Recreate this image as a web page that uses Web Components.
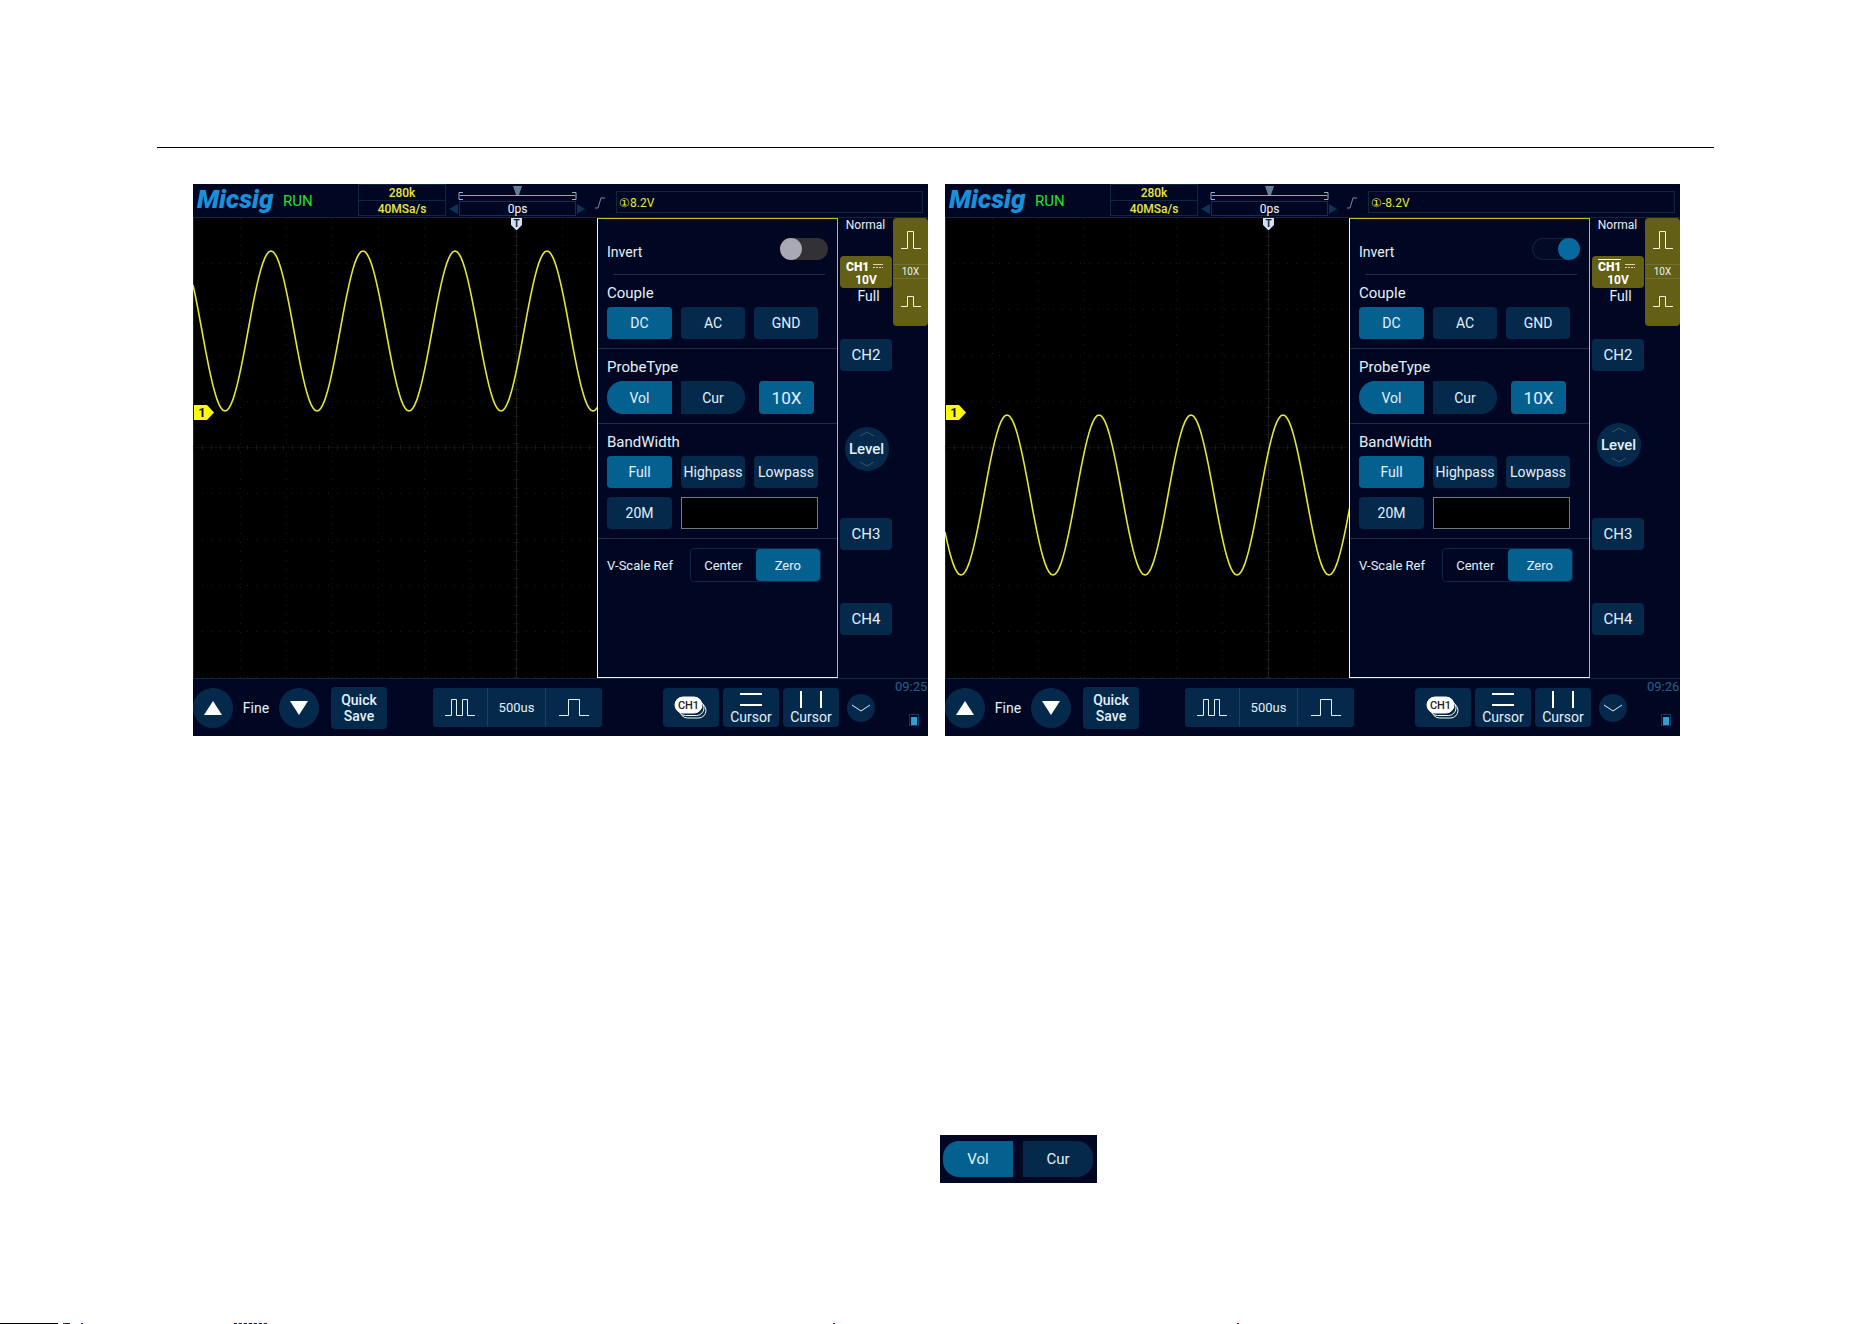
<!DOCTYPE html>
<html lang="en">
<head>
<meta charset="utf-8">
<title>Channel settings: Invert</title>
<style>
  body {
    margin: 0;
    min-height: 100vh;
    display: flex;
    flex-direction: column;
    background: #fff;
    font-family: Roboto, "Liberation Sans", sans-serif;
  }
  hr {
    height: 1px;
    margin: 147px 158px 36px 157px;
    border: 0;
    background: #000;
  }
  .screens {
    display: grid;
    grid-template-columns: 1fr 1fr;
    gap: 17px;
    margin: 0 192px 0 193px;
  }
  .inline-figure {
    margin: 399px 0 0 50%;
    padding-left: 4px;
  }
  .page-end {
    margin-top: auto;
    height: 1px;
    display: flex;
  }
  .page-end i { height: 1px; }
</style>
</head>
<body>
  <hr>
  <main class="screens">
    <scope-screen trigger="①8.2V" time="09:25" peak="78" mid="113" level="low"></scope-screen>
    <scope-screen trigger="①-8.2V" time="09:26" peak="62" mid="277" inverted></scope-screen>
  </main>
  <section class="inline-figure">
    <probe-pair framed></probe-pair>
  </section>
  <footer class="page-end">
    <i style="width:58px;background:#000"></i>
    <i style="width:5px"></i>
    <i style="width:7px;background:#422"></i>
    <i style="width:11px"></i>
    <i style="width:2px;background:#426"></i>
    <i style="width:151px"></i>
    <i style="width:33px;background:repeating-linear-gradient(90deg,#224 0 3px,#fff 3px 4px,#8cc 4px 5px)"></i>
    <i style="width:566px"></i>
    <i style="width:2px;background:#614"></i>
    <i style="width:402px"></i>
    <i style="width:2px;background:#614"></i>
  </footer>

<script>
class ScopeButton extends HTMLElement {
  connectedCallback() {
    this.attachShadow({ mode: 'open' });
    this.shadowRoot.innerHTML = `
      <style>
        :host { display: block; }
        button {
          width: 100%;
          height: 100%;
          padding: 0;
          border: 0;
          border-radius: var(--radius, 4px);
          background: #05294a;
          color: #e4f1fa;
          font: inherit;
          white-space: nowrap;
          display: flex;
          flex-direction: column;
          align-items: center;
          justify-content: center;
        }
        :host([active]) button { background: #04608f; }
      </style>
      <button type="button"><slot></slot></button>
    `;
    const label = this.getAttribute('label');
    if (label) this.shadowRoot.querySelector('button').setAttribute('aria-label', label);
  }
}
customElements.define('scope-button', ScopeButton);

class ProbePair extends HTMLElement {
  connectedCallback() {
    this.attachShadow({ mode: 'open' });
    this.shadowRoot.innerHTML = `
      <style>
        :host { display: grid; grid-template-columns: 65px 64px; gap: 9px; height: 33px; font-size: 14px; }
        :host([framed]) {
          width: 150px;
          grid-template-columns: 1fr 1fr;
          height: 36px;
          padding: 6px 4px 6px 3px;
          gap: 10px;
          background: #010722;
          font-size: 15px;
        }
        .vol { --radius: 16px 0 0 16px; }
        .cur { --radius: 0 16px 16px 0; }
      </style>
      <scope-button class="vol" active>Vol</scope-button>
      <scope-button class="cur">Cur</scope-button>
    `;
  }
}
customElements.define('probe-pair', ProbePair);

class ScopeTopbar extends HTMLElement {
  connectedCallback() {
    this.attachShadow({ mode: 'open' });
    this.shadowRoot.innerHTML = `
      <style>
        :host {
          display: flex;
          height: 33px;
          border-bottom: 1px solid #10283f;
          color: #e8e840;
          font-size: 12px;
        }
        .logo {
          width: 90px;
          box-sizing: border-box;
          padding-left: 4px;
          color: #1a90dd;
          font: italic 900 26px/30px Roboto, "Liberation Sans", sans-serif;
        }
        .run { width: 75px; color: #22e032; font-size: 15px; line-height: 34px; }
        .sample { width: 86px; height: 30px; border: 1px solid #14263f; text-align: center; font-weight: 500; }
        .sample div { line-height: 17px; height: 15px; }
        .sample div + div { border-top: 1px solid #14263f; line-height: 16px; height: 14px; }
        .timebase { width: 138px; margin-left: 2px; }
        .timebase svg { display: block; }
        .offset { display: flex; align-items: center; height: 15px; }
        .offset span {
          flex: 1;
          height: 13px;
          border: 1px solid #10304e;
          color: #f4f8fc;
          line-height: 14px;
          text-align: center;
        }
        .edge { margin: 13px 10px 0 8px; width: 12px; height: 12px; }
        .trigger {
          flex: 1;
          height: 20px;
          margin: 7px 5px 0 0;
          padding-left: 2px;
          border: 1px solid #10283f;
          line-height: 22px;
        }
      </style>
      <div class="logo">Micsig</div>
      <div class="run">RUN</div>
      <div class="sample"><div>280k</div><div>40MSa/s</div></div>
      <div class="timebase">
        <svg width="138" height="17" fill="none" aria-hidden="true">
          <path d="M15 8.500h-4v7h4M124 8.500h4v7h-4" stroke="#9fb0b8"/>
          <path d="M12 11.500h115" stroke="#b5b51c"/>
          <path d="M65 2h9l-3 9h-3z" fill="#617f92"/>
        </svg>
        <div class="offset">
          <svg width="11" height="12"><path d="M10 1v10L1 6z" fill="#0a3554"/></svg>
          <span>0ps</span>
          <svg width="10" height="12"><path d="M1 1v10l8-5z" fill="#0a3554"/></svg>
        </div>
      </div>
      <svg class="edge" viewBox="0 0 12 12" fill="none" stroke="#7d8894" aria-hidden="true"><path d="M1 11h3L7 1h4"/></svg>
      <div class="trigger">${this.getAttribute('trigger')}</div>
    `;
  }
}
customElements.define('scope-topbar', ScopeTopbar);

class ScopeWave extends HTMLElement {
  connectedCallback() {
    const peak = Number(this.getAttribute('peak'));
    const mid = Number(this.getAttribute('mid'));
    const period = 92;
    const amplitude = 80;

    const points = [];
    for (let x = 0; x <= 900; x += 2) {
      const y = mid - amplitude * Math.cos((x - peak) / period * 2 * Math.PI);
      points.push(`${x},${y.toFixed(1)}`);
    }
    let grid = '';
    for (let x = 47; x < 900; x += 46) grid += `M${x}.500 0V460`;
    for (let y = 45; y < 460; y += 46) grid += `M0 ${y}.500H900`;

    this.attachShadow({ mode: 'open' });
    this.shadowRoot.innerHTML = `
      <style>
        :host { display: block; position: relative; overflow: hidden; background: #000; box-shadow: inset 1px 0 #10283f; }
        svg { position: absolute; left: 0; top: 0; }
        text { font: 700 13px Roboto, "Liberation Sans", sans-serif; }
      </style>
      <svg width="900" height="460" fill="none">
        <path d="${grid}" stroke="#1b1b1b" stroke-dasharray="1 8"/>
        <path d="M0 229.500H900" stroke="#0c0c0c"/>
        <path d="M0 229.500H900" stroke="#181818" stroke-width="5" stroke-dasharray="1 8"/>
        <path d="M323.500 0V460" stroke="#1e1e1e"/>
        <path d="M323.500 0V460" stroke="#181818" stroke-width="5" stroke-dasharray="1 8"/>
        <polyline points="${points.join(' ')}" stroke="#e6e634" stroke-width="1.600"/>
        <path d="M318 0h11v7l-5 5h-1l-5-5z" fill="#cfe2f2"/>
        <text x="323.500" y="9" text-anchor="middle" fill="#16202c" style="font-size:10px">T</text>
        <path d="M1 187h13l7 7.500-7 7.500H1z" fill="#fbfb08"/>
        <text x="9" y="199" text-anchor="middle" fill="#111">1</text>
      </svg>
    `;
  }
}
customElements.define('scope-wave', ScopeWave);

class ChannelPanel extends HTMLElement {
  connectedCallback() {
    this.attachShadow({ mode: 'open' });
    this.shadowRoot.innerHTML = `
      <style>
        :host {
          display: block;
          box-sizing: border-box;
          width: 241px;
          border: 1px solid #f0f4fa;
          border-top-color: #c4c41c;
          border-right-color: #c4c41c;
          background: #010722;
          color: #e4f1fa;
          font-size: 14px;
        }
        section { padding: 9px 17px 9px 9px; border-bottom: 1px solid #232c45; }
        .invert {
          display: flex;
          align-items: flex-end;
          justify-content: space-between;
          height: 41px;
          padding: 0 9px 14px 9px;
          border: 0;
        }
        .invert label { line-height: 16px; }
        .rule { height: 1px; margin: 0 12px 0 15px; background: #232c45; }
        h3 { margin: 0 0 5px; font-weight: 400; font-size: 15px; line-height: 18px; }
        .row { display: grid; grid-template-columns: 65px 64px 64px; gap: 9px; grid-auto-rows: 32px; }
        .probe { display: flex; gap: 14px; }
        .factor { width: 55px; height: 33px; font-size: 17px; }
        input[type="text"] {
          grid-column: 2 / 4;
          box-sizing: border-box;
          width: 100%;
          height: 32px;
          border: 1px solid #75797e;
          border-radius: 0;
          background: #000;
          color: inherit;
          font: inherit;
        }
        input[type="checkbox"] {
          appearance: none;
          display: flex;
          box-sizing: border-box;
          width: 48px;
          height: 22px;
          margin: 0;
          border-radius: 11px;
          background: #323236;
        }
        input[type="checkbox"]::before {
          content: "";
          width: 22px;
          height: 22px;
          border-radius: 50%;
          background: #a9a9b3;
        }
        input[type="checkbox"]:checked {
          justify-content: flex-end;
          background: #020a26;
          box-shadow: inset 0 0 0 1px #0b2440;
        }
        input[type="checkbox"]:checked::before { background: #066a9f; }
        .bandwidth .row + .row { margin-top: 9px; }
        .scale {
          display: flex;
          align-items: center;
          justify-content: space-between;
          padding: 9px 16px 9px 9px;
          border: 0;
          font-size: 13px;
        }
        .segment {
          display: grid;
          grid-template-columns: 1fr 1fr;
          width: 129px;
          height: 32px;
          border: 1px solid #0a2745;
          border-radius: 4px;
        }
        .segment button {
          border: 0;
          padding: 0;
          border-radius: 4px;
          background: none;
          color: inherit;
          font: inherit;
        }
        .segment .on { background: #04608f; }
      </style>
      <section class="invert">
        <label for="invert">Invert</label>
        <input type="checkbox" id="invert" ${this.hasAttribute('inverted') ? 'checked' : ''}>
      </section>
      <div class="rule"></div>
      <section>
        <h3>Couple</h3>
        <div class="row">
          <scope-button active>DC</scope-button>
          <scope-button>AC</scope-button>
          <scope-button>GND</scope-button>
        </div>
      </section>
      <section>
        <h3>ProbeType</h3>
        <div class="probe">
          <probe-pair></probe-pair>
          <scope-button class="factor" active>10X</scope-button>
        </div>
      </section>
      <section class="bandwidth">
        <h3>BandWidth</h3>
        <div class="row">
          <scope-button active>Full</scope-button>
          <scope-button>Highpass</scope-button>
          <scope-button>Lowpass</scope-button>
        </div>
        <div class="row">
          <scope-button>20M</scope-button>
          <input type="text" aria-label="Cutoff frequency">
        </div>
      </section>
      <section class="scale">
        <span>V-Scale Ref</span>
        <div class="segment">
          <button type="button">Center</button>
          <button type="button" class="on">Zero</button>
        </div>
      </section>
    `;
  }
}
customElements.define('channel-panel', ChannelPanel);

class ChannelRail extends HTMLElement {
  connectedCallback() {
    this.attachShadow({ mode: 'open' });
    this.shadowRoot.innerHTML = `
      <style>
        :host { display: flex; width: 90px; color: #e4f1fa; }
        .channels { width: 55px; font-size: 15px; }
        .mode { height: 38px; font-size: 12px; line-height: 14px; text-align: center; }
        .ch1 {
          display: block;
          width: 52px;
          height: 32px;
          margin-left: 2px;
          padding: 0;
          border: 0;
          border-radius: 4px;
          background: #635f14;
          color: #fff;
          font: 700 12px/12px Roboto, "Liberation Sans", sans-serif;
        }
        .ch1 span { display: flex; gap: 4px; padding-left: 6px; align-items: center; }
        .ch1 b { border-top: 1px solid transparent; line-height: 14px; }
        :host([inverted]) .ch1 b { border-top-color: #fff; }
        .width { height: 51px; padding-left: 6px; font-size: 14px; line-height: 17px; text-align: center; }
        scope-button { width: 52px; height: 32px; margin-left: 2px; }
        .knob { display: flex; align-items: center; justify-content: center; height: 147px; box-sizing: border-box; }
        :host([level="low"]) .knob { padding-top: 8px; }
        .knob scope-button { width: 44px; height: 44px; --radius: 50%; font-weight: 500; line-height: 14px; }
        .knob span { margin: 4px 0; }
        .knob svg { display: block; }
        .ch3 { margin-bottom: 53px; }
        .zoom {
          width: 35px;
          height: 108px;
          border-radius: 4px;
          background: #635f14;
          display: grid;
          grid-template-rows: 47px 13px 1fr;
          align-items: center;
          justify-items: center;
          font-size: 10px;
        }
        .zoom button { width: 100%; height: 100%; padding: 0; border: 0; background: none; }
        .zoom span { width: 100%; line-height: 13px; text-align: center; box-shadow: 0 1px #74712c, 0 -1px #74712c; }
      </style>
      <div class="channels">
        <div class="mode">Normal</div>
        <button type="button" class="ch1">
          <span><b>CH1</b><svg width="10" height="4" stroke="#d8d8b0"><path d="M0 .500h10"/><path d="M0 3.500h10" stroke-dasharray="2 1"/></svg></span>
          10V
        </button>
        <div class="width">Full</div>
        <scope-button>CH2</scope-button>
        <div class="knob">
          <scope-button>
            <svg width="16" height="8" fill="none" stroke="#3a5468"><path d="M1 6l7-4 7 4"/></svg>
            <span>Level</span>
            <svg width="16" height="8" fill="none" stroke="#3a5468"><path d="M1 2l7 4 7-4"/></svg>
          </scope-button>
        </div>
        <scope-button class="ch3">CH3</scope-button>
        <scope-button>CH4</scope-button>
      </div>
      <div class="zoom">
        <button type="button" aria-label="Larger volts per division">
          <svg width="20" height="20" fill="none" stroke="#f2f2e6"><path d="M0 18.500h6.500V1.500h6v17H20"/></svg>
        </button>
        <span>10X</span>
        <button type="button" aria-label="Smaller volts per division">
          <svg width="20" height="14" fill="none" stroke="#f2f2e6"><path d="M0 12.500h6.500v-10h6v10H20"/></svg>
        </button>
      </div>
    `;
  }
}
customElements.define('channel-rail', ChannelRail);

class ScopeToolbar extends HTMLElement {
  connectedCallback() {
    this.attachShadow({ mode: 'open' });
    this.shadowRoot.innerHTML = `
      <style>
        :host {
          display: flex;
          align-items: center;
          box-sizing: border-box;
          height: 58px;
          border-top: 1px solid #10283f;
          color: #e4f1fa;
          font-size: 14px;
        }
        .group { display: flex; align-items: center; }
        .round { width: 40px; height: 40px; --radius: 50%; }
        .fine { width: 46px; text-align: center; }
        .save { width: 56px; height: 42px; margin-left: 12px; font-weight: 500; line-height: 16px; }
        .time {
          display: grid;
          grid-template-columns: 54px 57px 56px;
          gap: 1px;
          height: 39px;
          margin-left: 46px;
          border-radius: 4px;
          background: #0c456b;
          overflow: hidden;
          font-size: 13px;
        }
        .time scope-button { --radius: 0; }
        .right { height: 100%; margin-left: auto; }
        .tools { gap: 4px; }
        .tools scope-button { width: 56px; height: 39px; line-height: 16px; }
        .more { --radius: 50%; width: 28px; height: 28px; margin: 0 20px 0 8px; }
        .status { width: 33px; height: 100%; color: #1c628f; font-size: 13px; line-height: 16px; }
        .status svg { display: block; margin: 18px 0 0 14px; }
        svg text { font: 500 11px Roboto, "Liberation Sans", sans-serif; }
      </style>
      <div class="group">
        <scope-button class="round" label="Increase"><svg width="18" height="14" fill="#fff"><path d="M9 0l9 14H0z"/></svg></scope-button>
        <span class="fine">Fine</span>
        <scope-button class="round" label="Decrease"><svg width="18" height="14" fill="#fff"><path d="M9 14l9-14H0z"/></svg></scope-button>
        <scope-button class="save"><span>Quick</span><span>Save</span></scope-button>
      </div>
      <div class="time">
        <scope-button label="Longer time base"><svg width="30" height="18" fill="none" stroke="#e4f1fa"><path d="M0 16.500h6.500V.500h5v16h6V.500h5v16H30"/></svg></scope-button>
        <scope-button>500us</scope-button>
        <scope-button label="Shorter time base"><svg width="30" height="18" fill="none" stroke="#e4f1fa"><path d="M0 16.500h9.500V.500h11v16H30"/></svg></scope-button>
      </div>
      <div class="group right">
        <div class="group tools">
          <scope-button>
            <svg width="34" height="24" fill="#05294a" stroke="#fff">
              <rect x="6" y="7" width="26" height="15" rx="7.500"/>
              <rect x="4" y="4.500" width="26" height="15" rx="7.500"/>
              <rect x="1" y="1" width="27" height="16" rx="8" fill="#fff"/>
              <text x="14.500" y="13" text-anchor="middle" fill="#222" stroke="none">CH1</text>
            </svg>
          </scope-button>
          <scope-button><svg width="24" height="18" stroke="#fff" stroke-width="2"><path d="M1 3h22M1 14h22"/></svg><span>Cursor</span></scope-button>
          <scope-button><svg width="24" height="18" stroke="#fff" stroke-width="2"><path d="M2 0v17M22 0v17"/></svg><span>Cursor</span></scope-button>
        </div>
        <scope-button class="more" label="More"><svg width="20" height="10" fill="none" stroke="#e4f1fa"><path d="M1 2l9 6 9-6"/></svg></scope-button>
        <div class="status">
          ${this.getAttribute('time')}
          <svg width="10" height="13" fill="none"><rect x=".500" y="1.500" width="9" height="11" stroke="#123c5e"/><path d="M2 4h6v8H2z" fill="#2f9fd6"/></svg>
        </div>
      </div>
    `;
  }
}
customElements.define('scope-toolbar', ScopeToolbar);

class ScopeScreen extends HTMLElement {
  connectedCallback() {
    const attr = name => this.getAttribute(name);
    const inverted = this.hasAttribute('inverted') ? 'inverted' : '';
    this.attachShadow({ mode: 'open' });
    this.shadowRoot.innerHTML = `
      <style>
        :host { display: block; background: #010722; }
        .body { display: flex; min-height: 460px; }
        scope-wave { flex: 1; }
      </style>
      <scope-topbar trigger="${attr('trigger')}"></scope-topbar>
      <div class="body">
        <scope-wave peak="${attr('peak')}" mid="${attr('mid')}"></scope-wave>
        <channel-panel ${inverted}></channel-panel>
        <channel-rail ${inverted} level="${attr('level') || 'mid'}"></channel-rail>
      </div>
      <scope-toolbar time="${attr('time')}"></scope-toolbar>
    `;
  }
}
customElements.define('scope-screen', ScopeScreen);
</script>
</body>
</html>
